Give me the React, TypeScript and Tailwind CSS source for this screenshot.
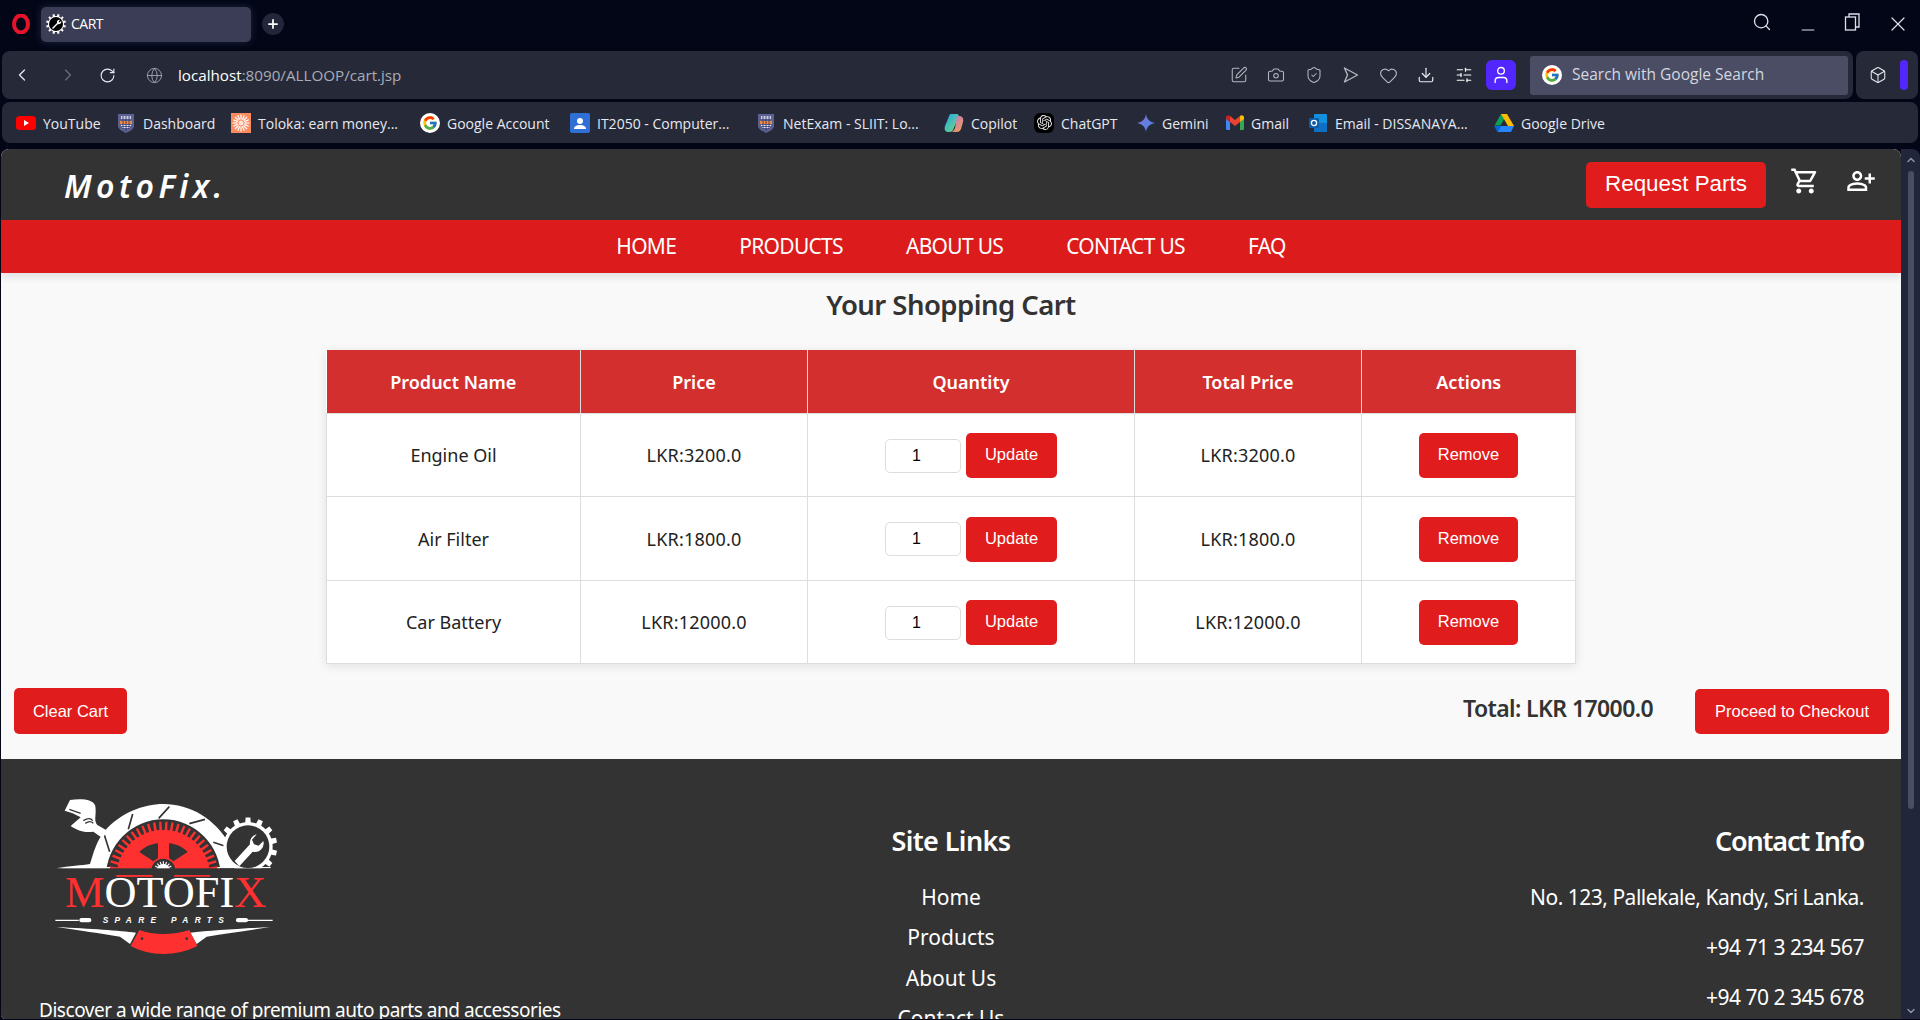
import {
  ChevronLeft,
  ChevronRight,
  RotateCw,
  Globe,
  Search,
  Minus,
  X,
  SquarePen,
  Camera,
  ShieldCheck,
  Heart,
  Download,
  SlidersHorizontal,
  User,
  Box,
  Plus,
  ChevronUp,
  ChevronDown,
} from "lucide-react";
import { FcGoogle } from "react-icons/fc";
import { SiOpenai } from "react-icons/si";
import { MdOutlineShoppingCart, MdOutlinePersonAddAlt } from "react-icons/md";

function gearPath(cx: number, cy: number, outer: number, inner: number, teeth: number, from = 0, to = 360) {
  const pts: string[] = [];
  const step = (to - from) / teeth;
  for (let i = 0; i < teeth; i++) {
    const a = from + i * step;
    const angles = [
      [a, inner],
      [a + step * 0.25, inner],
      [a + step * 0.32, outer],
      [a + step * 0.68, outer],
      [a + step * 0.75, inner],
    ];
    for (const [deg, r] of angles) {
      const rad = (deg * Math.PI) / 180;
      pts.push(`${(cx + r * Math.cos(rad)).toFixed(1)} ${(cy + r * Math.sin(rad)).toFixed(1)}`);
    }
  }
  return "M" + pts.join("L") + "Z";
}

function OperaLogo() {
  return (
    <svg width="20" height="20" viewBox="0 0 20 20">
      <ellipse cx="10" cy="10" rx="7" ry="8.6" fill="none" stroke="#e8132b" strokeWidth="4" />
    </svg>
  );
}

function TabIcon() {
  return (
    <svg width="20" height="20" viewBox="0 0 20 20">
      <path d={gearPath(10, 10, 10, 8, 12)} fill="#fff" />
      <circle cx="10" cy="10" r="7" fill="#000" />
      <path d="M6 14l5-5a2.500 2.500 0 0 1 3.200-3.200l-1.600 1.600 1 1 1.600-1.600A2.500 2.500 0 0 1 12 10l-5 5z" fill="#fff" />
    </svg>
  );
}

function ShieldFavicon() {
  return (
    <span className="flex w-[18px]">
      <svg width="16" height="20" viewBox="0 0 16 20">
        <path d="M0 1h16v12c0 3-4 5-8 7-4-2-8-4-8-7z" fill="#5b6190" />
        <path d="M3 3h10v3H3z" fill="#c9cbe0" />
        <path d="M2 8h12v3H2z" fill="#f08a3c" />
        <path d="M3 12h10v1H3zM4 14h8v1H4z" fill="#e3e4f0" />
        <path d="M5 3v13M8 3v15M11 3v13" stroke="#2e3366" strokeWidth="0.8" />
      </svg>
    </span>
  );
}

function TolokaIcon() {
  const rays = Array.from({ length: 16 }, (_, i) => (i * 360) / 16);
  return (
    <svg width="20" height="20" viewBox="0 0 20 20">
      <rect width="20" height="20" fill="#fb8a5f" />
      {rays.map((r) => (
        <path key={r} d="M10 1.500v5" stroke="#fff" strokeWidth="1.200" transform={`rotate(${r} 10 10)`} />
      ))}
      <circle cx="10" cy="10" r="2.500" fill="#fde4d8" />
    </svg>
  );
}

function BookmarkIcon({ name }: { name: string }) {
  if (name === "YouTube")
    return (
      <svg width="20" height="14" viewBox="0 0 20 14">
        <rect width="20" height="14" rx="3.500" fill="#f00" />
        <path d="M8 4l5 3-5 3z" fill="#fff" />
      </svg>
    );
  if (name === "Dashboard" || name === "NetExam") return <ShieldFavicon />;
  if (name === "Toloka") return <TolokaIcon />;
  if (name === "Google")
    return (
      <span className="flex h-5 w-5 items-center justify-center rounded-full bg-white">
        <FcGoogle size={16} />
      </span>
    );
  if (name === "IT2050")
    return (
      <svg width="20" height="20" viewBox="0 0 20 20">
        <rect width="20" height="20" rx="2" fill="#2f6fd6" />
        <circle cx="10" cy="8" r="3" fill="#fff" />
        <path d="M4 16c0-3 3-4 6-4s6 1 6 4z" fill="#fff" />
      </svg>
    );
  if (name === "Copilot")
    return (
      <svg width="20" height="20" viewBox="0 0 20 20">
        <defs>
          <linearGradient id="cp1" x1="0" y1="0" x2="1" y2="1">
            <stop offset="0" stopColor="#1fa2ee" />
            <stop offset="1" stopColor="#7adf6e" />
          </linearGradient>
          <linearGradient id="cp2" x1="0" y1="0" x2="1" y2="1">
            <stop offset="0" stopColor="#b46ff2" />
            <stop offset="1" stopColor="#f9a23c" />
          </linearGradient>
        </defs>
        <path d="M6 1h7c2 0 2 2 1 4L9 17c-1 2-3 2-5 2-3 0-4-3-3-6z" fill="url(#cp1)" />
        <path d="M13 3h2c3 0 5 2 4 6l-2 7c-1 2-2 3-4 3H7c2 0 3-2 4-4z" fill="url(#cp2)" />
      </svg>
    );
  if (name === "ChatGPT")
    return (
      <span className="flex h-5 w-5 items-center justify-center rounded-md bg-black">
        <SiOpenai size={15} color="#e8e8e8" />
      </span>
    );
  if (name === "Gemini")
    return (
      <svg width="18" height="18" viewBox="0 0 18 18">
        <defs>
          <linearGradient id="gem" x1="0" y1="0" x2="1" y2="1">
            <stop offset="0" stopColor="#8a6fd1" />
            <stop offset="1" stopColor="#3f8cf0" />
          </linearGradient>
        </defs>
        <path d="M9 0c.6 5 3.500 8 9 9-5.500 1-8.400 4-9 9-.6-5-3.500-8-9-9 5.500-1 8.400-4 9-9z" fill="url(#gem)" />
      </svg>
    );
  if (name === "Gmail")
    return (
      <svg width="18" height="15" viewBox="0 0 18 15">
        <path d="M0 3v10.500A1.500 1.500 0 0 0 1.500 15H4V7z" fill="#4285f4" />
        <path d="M18 3v10.500a1.500 1.500 0 0 1-1.500 1.500H14V7z" fill="#34a853" />
        <path d="M14 1v6l4-3V2.500C18 .5 15.500-.5 14 1z" fill="#fbbc04" />
        <path d="M4 7V1l5 4 5-4v6l-5 4z" fill="#ea4335" />
        <path d="M0 2.500V4l4 3V1C2.500-.5 0 .5 0 2.500z" fill="#c5221f" />
      </svg>
    );
  if (name === "Email")
    return (
      <svg width="20" height="20" viewBox="0 0 20 20">
        <rect x="6" y="1" width="13" height="18" rx="1" fill="#1490df" />
        <rect x="6" y="10" width="13" height="9" fill="#0f6fc5" />
        <rect x="1" y="5" width="10" height="10" rx="1" fill="#0a5ba8" />
        <circle cx="6" cy="10" r="2.600" fill="none" stroke="#fff" strokeWidth="1.300" />
      </svg>
    );
  return (
    <svg width="20" height="18" viewBox="0 0 20 18">
      <path d="M7 0h6l-6.500 11.500h-6z" fill="#0f9d58" />
      <path d="M7 0h6l7 12h-6z" fill="#fbbc04" />
      <path d="M3.500 18L6.500 12H20l-3 6z" fill="#2684fc" />
      <path d="M0 12l3.500 6 3.500-6z" fill="#0066da" />
    </svg>
  );
}

const bookmarks = [
  { icon: "YouTube", label: "YouTube", width: "w-[102px]" },
  { icon: "Dashboard", label: "Dashboard", width: "w-[113px]" },
  { icon: "Toloka", label: "Toloka: earn money...", width: "w-[189px]" },
  { icon: "Google", label: "Google Account", width: "w-[150px]" },
  { icon: "IT2050", label: "IT2050 - Computer...", width: "w-[188px]" },
  { icon: "NetExam", label: "NetExam - SLIIT: Lo...", width: "w-[186px]" },
  { icon: "Copilot", label: "Copilot", width: "w-[90px]" },
  { icon: "ChatGPT", label: "ChatGPT", width: "w-[103px]" },
  { icon: "Gemini", label: "Gemini", width: "w-[89px]" },
  { icon: "Gmail", label: "Gmail", width: "w-[82px]" },
  { icon: "Email", label: "Email - DISSANAYA...", width: "w-[186px]" },
  { icon: "Drive", label: "Google Drive", width: "w-[130px]" },
];

function BrowserChrome() {
  return (
    <div className="font-['Open_Sans',sans-serif] text-[14px] text-[#e6e8f0]">
      {/* Tab strip */}
      <div className="flex h-[51px] items-center pb-[3px]">
        <div className="ml-[11px] flex w-[30px]">
          <OperaLogo />
        </div>
        <div className="flex h-[35px] w-[210px] items-center rounded-[5px] bg-[#3a3d55] pl-[5px] shadow-[0_0_8px_rgba(90,95,130,0.35)]">
          <TabIcon />
          <span className="ml-[5px] -translate-y-px tracking-[-0.5px] text-white">CART</span>
        </div>
        <div className="ml-[11px] flex h-[22px] w-[22px] items-center justify-center rounded-full bg-[#23263a]">
          <Plus size={14} strokeWidth={3} color="#fff" />
        </div>
        <div className="ml-auto flex text-[#dfe1e8]">
          <div className="flex w-[45px] justify-center">
            <Search size={20} strokeWidth={1.6} className="-translate-x-px" />
          </div>
          <div className="flex w-[45px] justify-center">
            <Minus size={20} strokeWidth={1.4} className="translate-y-[8px]" />
          </div>
          <div className="flex w-[45px] justify-center">
            <svg width="18" height="20" viewBox="0 0 18 20" fill="none" stroke="currentColor" strokeWidth="1.300">
              <rect x="1.500" y="5" width="10" height="13" />
              <path d="M5 5V2h10v13h-3.500" />
            </svg>
          </div>
          <div className="flex w-[45px] justify-center">
            <X size={24} strokeWidth={1.2} />
          </div>
        </div>
      </div>

      {/* Address bar */}
      <div className="flex h-[48px] gap-[3px] pl-[2px] pr-[2px]">
        <div className="flex flex-1 items-center rounded-lg bg-[#262a38]">
          <div className="flex w-[40px] justify-center text-[#e6e8f0]">
            <ChevronLeft size={20} strokeWidth={1.6} />
          </div>
          <div className="flex w-[52px] justify-center text-[#6b6f80]">
            <ChevronRight size={20} strokeWidth={1.4} />
          </div>
          <div className="flex w-[27px] justify-center text-[#e6e8f0]">
            <RotateCw size={17} strokeWidth={1.6} />
          </div>
          <div className="ml-[20px] flex w-[27px] justify-center text-[#a9acb8]">
            <Globe size={17} strokeWidth={1.2} />
          </div>
          <div className="ml-[10px] text-[15.200px]">
            <span className="text-white">localhost</span>
            <span className="text-[#a9acb8]">:8090/ALLOOP/cart.jsp</span>
          </div>
          <div className="ml-auto flex items-center pr-[5px] text-[#b4b7c2]">
            <div className="flex w-[37.500px] justify-center">
              <SquarePen size={18} strokeWidth={1.4} />
            </div>
            <div className="flex w-[37.500px] justify-center">
              <Camera size={18} strokeWidth={1.4} />
            </div>
            <div className="flex w-[37.500px] justify-center">
              <ShieldCheck size={18} strokeWidth={1.4} />
            </div>
            <div className="flex w-[37.500px] justify-center">
              <svg width="18" height="18" viewBox="0 0 18 18" fill="none" stroke="currentColor" strokeWidth="1.400" strokeLinejoin="round">
                <path d="M2.500 2l13 7-13 7 3-7z" />
              </svg>
            </div>
            <div className="flex w-[37.500px] justify-center">
              <Heart size={19} strokeWidth={1.4} />
            </div>
            <div className="flex w-[37.500px] justify-center text-[#e6e8f0]">
              <Download size={18} strokeWidth={1.6} />
            </div>
            <div className="flex w-[37.500px] justify-center text-white">
              <SlidersHorizontal size={18} strokeWidth={1.6} />
            </div>
            <div className="ml-[3.500px] flex h-[30px] w-[30px] items-center justify-center rounded-md bg-[#5227ff] text-white">
              <User size={20} strokeWidth={1.6} />
            </div>
            <div className="ml-[14px] flex h-[39px] w-[318px] items-center rounded-[3px] bg-[#4a4d63] pl-[12px]">
              <span className="flex h-5 w-5 items-center justify-center rounded-full bg-white">
                <FcGoogle size={16} />
              </span>
              <span className="ml-[10px] text-[15.500px] text-[#d5d7e0]">Search with Google Search</span>
            </div>
          </div>
        </div>
        <div className="flex w-[62px] items-center rounded-lg bg-[#262a38] pl-[13px]">
          <Box size={18} strokeWidth={1.4} className="text-[#e6e8f0]" />
          <div className="ml-[13px] h-[30px] w-[8px] rounded-full bg-[#5227ff]" />
        </div>
      </div>

      {/* Bookmarks */}
      <div className="mx-[2px] mt-[3px] flex h-[41px] items-center rounded-lg bg-[#262a38] pl-[14px]">
        {bookmarks.map((b) => (
          <div key={b.icon} className={`flex items-center gap-[7px] ${b.width}`}>
            <BookmarkIcon name={b.icon} />
            <span className="translate-y-px whitespace-nowrap text-[14px] text-[#e6e8f0]">{b.label}</span>
          </div>
        ))}
      </div>
    </div>
  );
}

function FooterLogo() {
  return (
    <svg width="250" height="170" viewBox="0 0 750 510" className="block">
      {/* brake disc arch */}
      <path
        d="M48 235 C90 228 125 226 150 222 C160 190 170 150 195 122 C240 70 310 42 370 42 C450 42 525 85 570 165 L595 235 Z"
        fill="#fff"
      />
      <path d="M193 135l16 50M278 72l-13 46M388 50l-32 35M495 88l-47 13M565 172l-45-15" stroke="#333" strokeWidth="5" />
      <circle cx="370" cy="260" r="172" fill="#333" />

      {/* red gear */}
      <path d={gearPath(370, 260, 165, 140, 28, 180, 360)} fill="#ff3030" />
      <path d="M230 260a140 140 0 0 1 280 0z" fill="#ff3030" />
      <path d="M354 160 C332 162 314 170 298 186 L340 214 L354 204Z" fill="#333" />
      <path d="M387 160 C409 162 427 170 443 186 L400 214 L387 204Z" fill="#333" />
      <circle cx="370" cy="242" r="36" fill="#333" />
      <path d={gearPath(370, 242, 28, 20, 9, 180, 360)} fill="#fff" />
      <rect x="0" y="235" width="750" height="20" fill="#333" />
      <path d="M48 235 H210 V231 H150Z M532 231 H692 V235 H532Z" fill="#fff" />

      {/* right gear */}
      <path d={gearPath(624, 170, 88, 74, 14, 0, 360)} fill="#fff" />
      <circle cx="624" cy="170" r="64" fill="#333" />
      <rect x="540" y="235" width="200" height="40" fill="#333" />
      <path d="M584 213l46-50a26 26 0 0 1 20-30l-14 16 6 14 14 4 14-14a26 26 0 0 1-32 32l-40 44z" fill="#fff" />

      {/* adjustable wrench */}
      <path
        d="M74 62 L90 30 C125 25 160 28 166 48 C170 78 160 90 172 105 L202 122 L188 145 L160 125 C130 130 110 120 92 108 L122 82 L98 70 Z"
        fill="#fff"
      />
      <path d="M88 58 L122 70 M130 92 Q150 80 158 92 M136 100 Q150 90 160 100" stroke="#333" strokeWidth="4" fill="none" />

      {/* wordmark */}
      <text x="75" y="352" fontFamily="'Liberation Serif', serif" fontSize="133" fill="#fff">
        <tspan fill="#ff3030">M</tspan>OTOFI<tspan fill="#ff3030">X</tspan>
      </text>
      <text x="188" y="398" fontFamily="'Liberation Sans', sans-serif" fontSize="25" fontStyle="italic" fontWeight="700" letterSpacing="19" fill="#fff">
        SPARE PARTS
      </text>
      <path d="M46 389h70v4H46zM590 389h108v4H590z" fill="#fff" />
      <rect x="118" y="384" width="36" height="13" rx="6" fill="#fff" />
      <rect x="588" y="384" width="36" height="13" rx="6" fill="#fff" />

      {/* wings + banner */}
      <path d="M50 411 C150 416 240 422 288 428 L270 462 L240 440 C180 430 120 422 50 411Z" fill="#fff" />
      <path d="M690 411 C600 416 510 422 450 428 L470 462 L500 440 C560 430 620 422 690 411Z" fill="#fff" />
      <path d="M298 420 C340 436 400 436 448 420 L472 468 C410 500 330 500 272 468Z" fill="#ff3030" />
      <circle cx="306" cy="446" r="4" fill="#333" />
      <circle cx="440" cy="446" r="4" fill="#333" />
    </svg>
  );
}

const rows = [
  { name: "Engine Oil", price: "LKR:3200.0" },
  { name: "Air Filter", price: "LKR:1800.0" },
  { name: "Car Battery", price: "LKR:12000.0" },
];

const btn =
  "rounded-[5px] bg-[#e01c1c] font-['Liberation_Sans',Arial,sans-serif] text-white";

function CartTable() {
  return (
    <table className="ml-[325px] mt-[24px] w-[1249px] table-fixed border-collapse bg-white text-[18px] text-[#222] shadow-[0_2px_10px_rgba(0,0,0,0.1)]">
      <colgroup>
        <col className="w-[254px]" />
        <col className="w-[227px]" />
        <col className="w-[327px]" />
        <col className="w-[227px]" />
        <col className="w-[214px]" />
      </colgroup>
      <thead>
        <tr className="h-[63px] bg-[#d32f2f] text-white">
          {["Product Name", "Price", "Quantity", "Total Price", "Actions"].map((h) => (
            <th key={h} className="border border-b-0 border-t-0 border-[#ddd] pt-[2px] font-semibold first:border-l-0 last:border-r-0">
              {h}
            </th>
          ))}
        </tr>
      </thead>
      <tbody>
        {rows.map((r) => (
          <tr key={r.name} className="h-[83.500px]">
            <td className="border border-[#ddd] pt-[2px] text-center">{r.name}</td>
            <td className="border border-[#ddd] pt-[2px] text-center tracking-[0.2px]">{r.price}</td>
            <td className="border border-[#ddd] pt-[2px]">
              <div className="flex items-center justify-center gap-[5px]">
                <input
                  readOnly
                  value="1"
                  className="h-[34px] w-[76px] rounded-[5px] border border-[#ddd] pl-[26px] font-['Liberation_Sans',Arial,sans-serif] text-[16px] text-black"
                />
                <button className={`${btn} h-[45px] w-[91px] pb-[2px] text-[16.500px]`}>Update</button>
              </div>
            </td>
            <td className="border border-[#ddd] pt-[2px] text-center tracking-[0.2px]">{r.price}</td>
            <td className="border border-[#ddd] pt-[2px] text-center">
              <button className={`${btn} h-[45px] w-[99px] pb-[2px] text-[16.500px]`}>Remove</button>
            </td>
          </tr>
        ))}
      </tbody>
    </table>
  );
}

function Scrollbar() {
  return (
    <div className="flex w-[19px] shrink-0 flex-col items-center bg-[#22263a] text-[#8d90a3]">
      <ChevronUp size={12} strokeWidth={3} className="mt-[5px]" />
      <div className="mt-[5px] h-[638px] w-[6px] rounded-full bg-[#4a4d63]" />
      <ChevronDown size={12} strokeWidth={3} className="mb-[2px] mt-auto" />
    </div>
  );
}

export default function App() {
  return (
    <div className="flex h-[1020px] w-[1920px] flex-col overflow-hidden bg-[#020617]">
      <BrowserChrome />

      <div className="mt-[6px] flex min-h-0 flex-1 overflow-hidden rounded-t-lg rounded-bl-lg pb-px pl-px font-['Noto_Sans',sans-serif]">
        <div className="flex min-w-0 flex-1 flex-col overflow-hidden rounded-t-lg bg-[#f9f9f9]">
          {/* Header */}
          <header className="flex h-[71px] shrink-0 items-center bg-[#333] pl-[63px] pr-[25px]">
            <span className="translate-y-px text-[32px] font-semibold italic tracking-[4.400px] text-white">MotoFix.</span>
            <button className={`${btn} ml-auto h-[46px] w-[180px] pb-[2px] text-[22.400px]`}>Request Parts</button>
            <MdOutlineShoppingCart size={30} color="#fff" className="ml-[24px] -translate-y-[4px]" />
            <MdOutlinePersonAddAlt size={30} color="#fff" className="ml-[26px] -translate-y-[4px]" />
          </header>

          {/* Nav */}
          <nav className="relative flex h-[53px] shrink-0 items-center justify-center gap-[63px] bg-[#dc1c1c] pt-[1px] text-[21px] tracking-[-0.7px] text-white shadow-[0_4px_8px_rgba(0,0,0,0.1)]">
            <a>HOME</a>
            <a>PRODUCTS</a>
            <a>ABOUT US</a>
            <a>CONTACT US</a>
            <a>FAQ</a>
          </nav>

          {/* Cart */}
          <main className="h-[486px] shrink-0">
            <h1 className="mt-[11px] text-center text-[27.500px] font-semibold leading-[42px] tracking-[-0.55px] text-[#333]">Your Shopping Cart</h1>
            <CartTable />
            <div className="mt-[24px] flex items-center pl-[13px] pr-[12px]">
              <button className={`${btn} h-[46px] w-[113px] text-[16.500px]`}>Clear Cart</button>
              <span className="ml-auto -translate-y-[3px] text-[23px] font-semibold tracking-[-0.6px] text-[#333]">Total: LKR 17000.0</span>
              <button className={`${btn} ml-[42px] h-[45px] w-[194px] text-[16.500px]`}>Proceed to Checkout</button>
            </div>
          </main>

          {/* Footer */}
          <footer className="flex flex-1 bg-[#333] text-[21px] text-white">
            <div className="w-[660px] shrink-0 pl-[38px] pt-[31px]">
              <div className="ml-[1px]">
                <FooterLogo />
              </div>
              <p className="mt-[36px] whitespace-nowrap text-[19px] tracking-[-0.46px]">Discover a wide range of premium auto parts and accessories</p>
            </div>
            <div className="w-[580px] shrink-0 pt-[62px] text-center">
              <h3 className="text-[27px] font-semibold tracking-[-0.6px]">Site Links</h3>
              <ul className="mt-[20px] flex flex-col gap-[10.500px]">
                <li className="leading-[30px]">Home</li>
                <li className="leading-[30px]">Products</li>
                <li className="leading-[30px]">About Us</li>
                <li className="leading-[30px]">Contact Us</li>
              </ul>
            </div>
            <div className="flex-1 pr-[37px] pt-[62px] text-right">
              <h3 className="text-[27px] font-semibold tracking-[-1.2px]">Contact Info</h3>
              <ul className="mt-[20px] flex flex-col gap-[20px] tracking-[-0.5px]">
                <li className="leading-[30px]">No. 123, Pallekale, Kandy, Sri Lanka.</li>
                <li className="leading-[30px]">+94 71 3 234 567</li>
                <li className="leading-[30px]">+94 70 2 345 678</li>
              </ul>
            </div>
          </footer>
        </div>
        <Scrollbar />
      </div>
    </div>
  );
}
